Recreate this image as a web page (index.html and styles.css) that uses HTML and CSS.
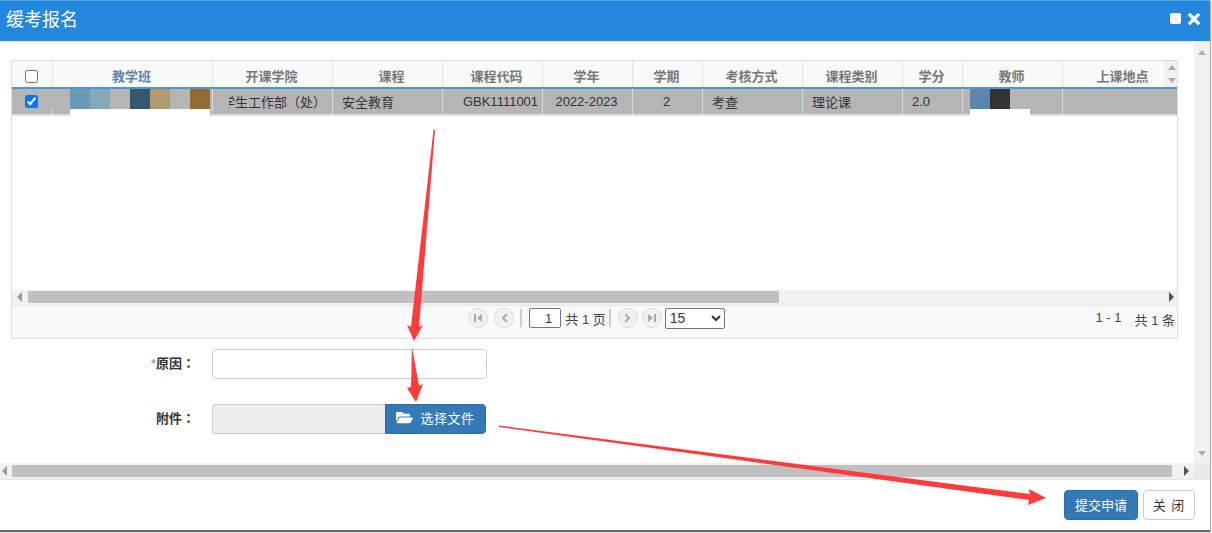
FILE: index.html
```html
<!DOCTYPE html>
<html lang="zh-CN">
<head>
<meta charset="utf-8">
<title>缓考报名</title>
<link rel="stylesheet" href="styles.css">
</head>
<body>
<div class="dialog">
  <header class="title-bar">
    <h1 class="title">缓考报名</h1>
    <div class="window-tools">
      <span class="tool-max"></span>
      <svg class="tool-close" viewBox="0 0 12 12"><path d="M2 2l8 8M10 2l-8 8"/></svg>
    </div>
  </header>
  <div class="main">
    <div class="content">
      <section class="grid-box">
        <div class="row head">
          <div class="cell center"><input type="checkbox"></div>
          <div class="cell center link">教学班</div>
          <div class="cell center">开课学院</div>
          <div class="cell center shift">课程</div>
          <div class="cell center shift">课程代码</div>
          <div class="cell center">学年</div>
          <div class="cell center">学期</div>
          <div class="cell center">考核方式</div>
          <div class="cell center">课程类别</div>
          <div class="cell center">学分</div>
          <div class="cell center">教师</div>
          <div class="cell center last-head">上课地点</div>
          <div class="head-scroll"><span class="arr up small"></span><span class="arr down small"></span></div>
        </div>
        <div class="row data">
          <div class="cell center"><input type="checkbox" checked></div>
          <div class="cell">
            <div class="redact">
              <div class="swatches">
                <i class="sw grey"></i><i class="sw c1"></i><i class="sw c2"></i><i class="sw grey20"></i><i class="sw c3"></i><i class="sw c4"></i><i class="sw grey20"></i><i class="sw c5"></i>
              </div>
              <div class="strip strip-a"></div>
            </div>
          </div>
          <div class="cell clip-cell" lang="zh-TW"><span class="clip"><span>学生工作部（处）</span></span></div>
          <div class="cell pad">安全教育</div>
          <div class="cell center code">GBK1111001</div>
          <div class="cell center">2022-2023</div>
          <div class="cell center">2</div>
          <div class="cell pad">考查</div>
          <div class="cell pad">理论课</div>
          <div class="cell pad">2.0</div>
          <div class="cell">
            <div class="redact teacher">
              <div class="swatches"><i class="sw c6"></i><i class="sw c7"></i></div>
              <div class="strip strip-b"></div>
            </div>
          </div>
          <div class="cell"></div>
        </div>
        <div class="grid-empty"></div>
        <div class="grid-hbar">
          <span class="arr left grey-arr"></span>
          <span class="grid-thumb"></span>
          <span class="arr right"></span>
        </div>
        <div class="pager">
          <div></div>
          <div class="pager-center">
            <span class="pg"><svg viewBox="0 0 12 12"><path d="M2 2h2v8H2zM10 2v8L5 6z"/></svg></span>
            <span class="pg"><svg viewBox="0 0 12 12"><path d="M8 1.500l1.500 1.500-3 3 3 3L8 10.500 3.500 6z"/></svg></span>
            <span class="sep"></span>
            <input class="page-input" type="text" value="1">
            <span class="page-total">共 1 页</span>
            <span class="sep sep-b"></span>
            <span class="pg pg-next"><svg viewBox="0 0 12 12"><path d="M4 1.500L2.500 3l3 3-3 3L4 10.500 8.500 6z"/></svg></span>
            <span class="pg pg-last"><svg viewBox="0 0 12 12"><path d="M2 2v8l5-4zM8 2h2v8H8z"/></svg></span>
            <select class="page-size"><option>15</option></select>
          </div>
          <div class="pager-info"><span>1 - 1</span><span>共 1 条</span></div>
        </div>
      </section>
      <form class="form">
        <div class="form-row">
          <label class="form-label" lang="zh-TW"><span class="req">*</span>原因：</label>
          <input class="text-input" type="text">
        </div>
        <div class="form-row">
          <label class="form-label" lang="zh-TW">附件：</label>
          <div class="file-group">
            <div class="file-name"></div>
            <button class="file-btn" type="button">
              <svg viewBox="0 0 576 512"><path d="M572.694 292.093L500.27 416.248A63.997 63.997 0 0 1 444.989 448H45.025c-18.523 0-30.064-20.093-20.731-36.093l72.424-124.155A64 64 0 0 1 152 256h399.964c18.523 0 30.064 20.093 20.73 36.093zM152 224h328v-48c0-26.51-21.49-48-48-48H272l-64-64H48C21.49 64 0 85.49 0 112v278.046l69.077-118.418C86.214 242.25 117.989 224 152 224z"/></svg>
              <span>选择文件</span>
            </button>
          </div>
        </div>
      </form>
    </div>
    <div class="vbar"><span class="arr up grey-arr"></span><span class="arr down grey-arr"></span></div>
    <div class="hbar">
      <span class="arr left grey-arr"></span>
      <span class="hbar-thumb"></span>
      <span class="arr right"></span>
    </div>
    <div class="corner"></div>
  </div>
  <footer class="footer">
    <button class="btn primary" type="button">提交申请</button>
    <button class="btn plain" type="button">关 闭</button>
  </footer>
</div>
<svg class="arrows" viewBox="0 0 1212 533">
  <polygon points="433.500,130 435,130 419,327 423,325 414,341 407,325 411,327"/>
  <polygon points="412,347 419,386 423,384 416,402 407,388 411,387"/>
  <polygon points="499,425.500 1030,494 1029,489 1046,498 1028,505 1029,500 499,427"/>
</svg>
</body>
</html>
```

FILE: styles.css
```css
* { box-sizing: border-box; }
html, body { margin: 0; height: 100%; }
body {
  background: #fff;
  font-family: "Liberation Sans", "Noto Sans CJK SC", sans-serif;
  font-size: 13px;
  color: #333;
  overflow: hidden;
}
.dialog {
  width: 1210px;
  height: 530px;
  display: flex;
  flex-direction: column;
  background: #fff;
  box-shadow: 0 2px 1px #666, 1px 1px 1px #bbb;
}
.title-bar {
  height: 42px;
  flex: none;
  display: flex;
  align-items: center;
  justify-content: space-between;
  padding: 0 10px 7px 6px;
  background: #2487de;
  border-top: 1px solid #5aa5e6;
  border-bottom: 1px solid #e4eef6;
}
.title { margin: 0; font-size: 18px; font-weight: 400; color: #fff; }
.window-tools { display: flex; align-items: center; gap: 7px; padding-top: 2px; }
.tool-max { width: 11px; height: 11px; border-radius: 2px; background: #fff; }
.tool-close { width: 12px; height: 12px; fill: none; stroke: #fff; stroke-width: 3.2; stroke-linecap: square; overflow: visible; }

.main {
  flex: 1;
  display: grid;
  grid-template-columns: 1194px 16px;
  grid-template-rows: 421px 17px;
}
.content { padding: 18px 16px 0 11px; min-height: 0; overflow: hidden; }

.grid-box {
  height: 279px;
  border: 1px solid #ddd;
  display: flex;
  flex-direction: column;
}
.row {
  display: grid;
  grid-template-columns: 41px 160px 120px 110px 100px 90px 70px 100px 100px 60px 100px 1fr;
  flex: none;
  position: relative;
}
.head {
  height: 28px;
  background: #f8f9f9;
  border-bottom: 2px solid #4a96d8;
  color: #777;
  font-weight: 700;
}
.head .cell { padding-top: 3px; border-right-color: #e2e4e4; }
.head .link { color: #5b86ab; }
.data {
  height: 27px;
  background: #b4b5b4;
  border-bottom: 2px solid #ddd;
  color: #333;
}
.cell {
  position: relative;
  display: flex;
  align-items: center;
  border-right: 1px solid #ddd;
  white-space: nowrap;
  min-width: 0;
}
.cell:last-child { border-right: 0; }
.center { justify-content: center; padding-right: 2px; }
.pad { padding-left: 9px; }
.code { padding-left: 18px; }
.shift { padding-left: 10px; }
.cell input[type="checkbox"] { margin: 0; width: 13px; height: 13px; }
.head input[type="checkbox"] { margin-top: 2px; }
.last-head { padding-left: 8px; }
.head-scroll {
  position: absolute;
  top: 0;
  bottom: 0;
  right: 0;
  width: 13px;
  display: flex;
  flex-direction: column;
  align-items: center;
  justify-content: center;
  gap: 8px;
  padding-left: 3px;
  background: #f1f1f1;
}
.redact { position: absolute; left: -1px; top: 0; width: 158px; }
.swatches { display: flex; height: 20px; }
.sw { display: block; width: 20px; height: 20px; flex: none; }
.grey { width: 18px; background: #b4b5b4; }
.grey20 { background: #b4b5b4; }
.c1 { background: #6b9ab8; }
.c2 { background: #84a8b8; }
.c3 { background: #36586e; }
.c4 { background: #b29a70; }
.c5 { background: #966a33; }
.c6 { background: #5a86ab; }
.c7 { background: #333; }
.strip { height: 7px; background: #fff; }
.strip-a { margin-left: 18px; width: 140px; }
.teacher { left: 7px; width: 60px; }
.strip-b { width: 60px; }
.clip-cell { justify-content: flex-end; padding-right: 6px; font-family: "Liberation Sans", "Noto Sans CJK TC", sans-serif; }
.clip { display: flex; justify-content: flex-end; width: 97px; overflow: hidden; }
.clip span { flex: none; }
.grid-empty { flex: 1; background: #fff; }

.arr { display: block; width: 0; height: 0; border-style: solid; border-color: transparent; flex: none; }
.arr.left { border-width: 5px 5px 5px 0; border-right-color: #555; }
.arr.right { border-width: 5px 0 5px 5px; border-left-color: #555; }
.arr.up { border-width: 0 4px 5px; border-bottom-color: #aaa; }
.arr.down { border-width: 5px 4px 0; border-top-color: #aaa; }
.arr.left.grey-arr { border-right-color: #999; }

.grid-hbar {
  height: 15px;
  flex: none;
  display: flex;
  align-items: center;
  background: #f1f1f1;
  padding: 0 3px 2px 5px;
}
.grid-thumb { width: 751px; height: 12px; margin-left: 6px; background: #c0c0c0; }
.grid-hbar .right { margin-left: auto; }
.pager {
  height: 33px;
  flex: none;
  display: grid;
  grid-template-columns: 1fr auto 1fr;
  align-items: center;
  padding: 0 2px 8px 6px;
  background: #f8f9f9;
  border-top: 1px solid #e4e4e4;
  color: #444;
}
.pager-center { display: flex; align-items: center; }
.pg {
  width: 20px;
  height: 20px;
  margin-right: 6px;
  display: flex;
  align-items: center;
  justify-content: center;
  border-radius: 50%;
  background: #f1f1f1;
  border: 1px solid #ddd;
}
.pg svg { width: 12px; height: 12px; fill: #aaa; }
.pg-next { margin-right: 4px; }
.pg-last { margin-right: 3px; }
.sep { width: 2px; height: 18px; margin: 0 7px 0 0; background: #c4d0d8; }
.sep-b { margin: 0 7px 0 3px; }
.page-input {
  width: 32px;
  height: 20px;
  padding: 0 8px 0 0;
  border: 1px solid #767676;
  border-radius: 2px;
  background: #fff;
  font: inherit;
  color: #333;
  text-align: right;
}
.page-total { margin-left: 4px; }
.page-size {
  width: 60px;
  height: 21px;
  border: 1px solid #767676;
  border-radius: 2px;
  background: #fff;
  font-family: inherit;
  font-size: 14px;
  color: #333;
}
.pager-info { display: flex; justify-content: flex-end; gap: 13px; padding-top: 2px; }

.form { display: flex; flex-direction: column; gap: 25px; margin-top: 10px; }
.form-row { display: flex; align-items: center; height: 30px; }
.form-label {
  width: 184px;
  margin-right: 17px;
  padding-bottom: 4px;
  text-align: right;
  font-family: "Liberation Sans", "Noto Sans CJK TC", sans-serif;
  font-weight: 700;
  color: #333;
}
.req { color: #e0734f; font-weight: 400; }
.text-input {
  width: 275px;
  height: 30px;
  border: 1px solid #ccc;
  border-radius: 4px;
  background: #fff;
}
.file-group { display: flex; width: 274px; height: 30px; }
.file-name {
  width: 173px;
  background: #eee;
  border: 1px solid #ccc;
  border-right: 0;
  border-radius: 4px 0 0 4px;
}
.file-btn {
  flex: 1;
  display: flex;
  align-items: center;
  justify-content: center;
  gap: 7px;
  padding: 0 0 3px;
  border: 1px solid #2e6da4;
  border-radius: 0 4px 4px 0;
  background: #337ab7;
  color: #fff;
  font: inherit;
  letter-spacing: 0.5px;
}
.file-btn svg { width: 17px; height: 15px; fill: #fff; }

.vbar {
  background: #f1f1f1;
  display: flex;
  flex-direction: column;
  align-items: center;
  justify-content: space-between;
  padding: 8px 0 7px;
}
.hbar {
  display: flex;
  align-items: center;
  padding: 2px 5px 2px 2px;
  background: #f1f1f1;
  border-bottom: 1px solid #e5e5e5;
}
.hbar-thumb { width: 1160px; height: 12px; margin-left: 5px; background: #c0c0c0; }
.hbar .right { margin-left: auto; }
.corner { background: #e9e9e9; border-bottom: 1px solid #e5e5e5; }

.footer {
  flex: 1;
  display: flex;
  justify-content: flex-end;
  align-items: flex-start;
  gap: 5px;
  padding: 10px 15px 0 0;
}
.btn { height: 30px; padding: 0 0 2px; border-radius: 4px; font: inherit; }
.primary { width: 74px; background: #337ab7; border: 1px solid #2e6da4; color: #fff; }
.plain { width: 52px; background: #fff; border: 1px solid #ccc; color: #333; letter-spacing: 1px; }

.arrows { position: absolute; left: 0; top: 0; width: 1212px; height: 533px; pointer-events: none; }
.arrows polygon { fill: #ff3b3b; }
```
